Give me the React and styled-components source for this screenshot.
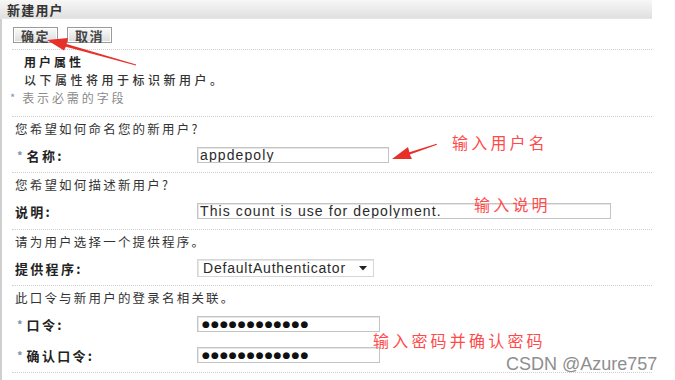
import React from "react";
import styled, { createGlobalStyle } from "styled-components";

const Global = createGlobalStyle`
  html, body { margin: 0; padding: 0; background: #ffffff; }
  body { font-family: "Noto Sans CJK SC", "Liberation Sans", sans-serif; color: #333; }
`;

const Page = styled.div`
  position: relative;
  width: 675px;
  height: 380px;
  overflow: hidden;
  background: #fff;
`;

const Header = styled.div`
  width: 645px;
  height: 18px;
  padding-left: 7px;
  display: flex;
  align-items: center;
  background: linear-gradient(#f7f7f7, #e0e0e0);
  border-bottom: 1px solid #e6e6e6;
  font-size: 13px;
  font-weight: 700;
  letter-spacing: 1.2px;
  color: #333;
`;

const Body = styled.div`
  width: 650px;
  border-left: 2px solid #cfcfcf;
  min-height: 361px;
`;

const Toolbar = styled.div`
  display: flex;
  gap: 9px;
  padding: ${(p) => (p.bottom ? "3px 0 0 13px" : "8px 0 6px 11px")};
`;

const Button = styled.div`
  width: 43px;
  height: 14px;
  border: 1px solid #9a9a9a;
  background: linear-gradient(#fbfbfb, #dcdcdc);
  box-shadow: inset 0 0 0 1px #fff;
  display: flex;
  align-items: center;
  justify-content: center;
  font-size: 13px;
  font-weight: 700;
  letter-spacing: 1.5px;
  color: #444;
`;

const Section = styled.div`
  margin-left: 10px;
  border-top: 1px dotted #cfcfcf;
  padding: 4px 0 ${(p) => p.pb ?? 2}px 3px;
`;

const IntroTitle = styled.div`
  padding-left: 9px;
  line-height: 15px;
  font-size: 12px;
  font-weight: 700;
  letter-spacing: 3px;
  color: #222;
`;

const IntroText = styled.div`
  padding-left: 9px;
  margin-top: 3px;
  line-height: 15px;
  font-size: 12px;
  font-weight: 500;
  letter-spacing: 3.5px;
  color: #333;
`;

const Required = styled.div`
  margin-left: -5px;
  margin-top: 3px;
  line-height: 15px;
  font-size: 12px;
  letter-spacing: 2.9px;
  color: #8a8a8a;
  display: flex;
  gap: 7px;
`;

const Star = styled.span`
  color: #7b93ad;
  font-size: 11px;
  letter-spacing: 0;
`;

const Question = styled.div`
  line-height: 15px;
  font-size: 12.5px;
  letter-spacing: 2.2px;
  color: #333;
`;

const Row = styled.div`
  display: flex;
  align-items: center;
  height: 30px;
  margin-top: ${(p) => (p.first ? 4 : 1)}px;
`;

const Label = styled.div`
  width: 182px;
  flex: none;
  display: flex;
  align-items: center;
  gap: 4px;
  padding-left: ${(p) => (p.required ? 2 : 0)}px;
  box-sizing: border-box;
  font-size: 13px;
  font-weight: 700;
  letter-spacing: 2.3px;
  color: #222;
`;

const Field = styled.div`
  width: ${(p) => p.w}px;
  height: 14px;
  box-sizing: content-box;
  border: 1px solid #c4c4c4;
  box-shadow: inset 1px 1px 0 #e6e6e6;
  background: #fff;
  padding-left: 2px;
  display: flex;
  align-items: center;
  font-family: "Liberation Sans", Arial, sans-serif;
  font-size: 14px;
  letter-spacing: ${(p) => p.ls ?? 1.1}px;
  color: #2a2a2a;
  white-space: nowrap;
  overflow: hidden;
`;

const Select = styled(Field)`
  height: 16px;
  padding-left: 5px;
  justify-content: space-between;
  padding-right: 6px;
  border-color: #d6d6d6;
`;

const Dots = styled.span`
  font-family: "DejaVu Sans", sans-serif;
  font-size: 9px;
  letter-spacing: 1.1px;
  padding-left: 2px;
  color: #111;
`;

const Note = styled.div`
  position: absolute;
  left: ${(p) => p.x}px;
  top: ${(p) => p.y}px;
  font-size: 16px;
  line-height: 16px;
  letter-spacing: 3.2px;
  color: #ff4a4a;
  white-space: nowrap;
`;

const Watermark = styled.div`
  position: absolute;
  left: 506px;
  top: 354px;
  font-family: "Liberation Sans", Arial, sans-serif;
  font-size: 18px;
  color: #8e8e8e;
  white-space: nowrap;
`;

const ArrowLayer = styled.svg`
  position: absolute;
  left: 0;
  top: 0;
  pointer-events: none;
`;

function Req() {
  return <Star>*</Star>;
}

export default function App() {
  return (
    <>
      <Global />
      <Page>
        <Header>新建用户</Header>
        <Body>
          <Toolbar>
            <Button>确定</Button>
            <Button>取消</Button>
          </Toolbar>
          <Section pb={11}>
            <IntroTitle>用户属性</IntroTitle>
            <IntroText>以下属性将用于标识新用户。</IntroText>
            <Required>
              <Star>*</Star>
              <span>表示必需的字段</span>
            </Required>
          </Section>
          <Section>
            <Question>您希望如何命名您的新用户?</Question>
            <Row first>
              <Label required>
                <Req />
                名称:
              </Label>
              <Field w={188}>appdepoly</Field>
            </Row>
          </Section>
          <Section pb={3}>
            <Question>您希望如何描述新用户?</Question>
            <Row first>
              <Label>说明:</Label>
              <Field w={410}>This count is use for depolyment.</Field>
            </Row>
          </Section>
          <Section>
            <Question>请为用户选择一个提供程序。</Question>
            <Row first>
              <Label>提供程序:</Label>
              <Select w={164} ls={0.8}>
                <span>DefaultAuthenticator</span>
                <svg width="8" height="5" viewBox="0 0 8 5">
                  <path d="M0 0 L8 0 L4 4.5 Z" fill="#222" />
                </svg>
              </Select>
            </Row>
          </Section>
          <Section>
            <Question>此口令与新用户的登录名相关联。</Question>
            <Row first>
              <Label required>
                <Req />
                口令:
              </Label>
              <Field w={179}>
                <Dots>●●●●●●●●●●●●</Dots>
              </Field>
            </Row>
            <Row>
              <Label required>
                <Req />
                确认口令:
              </Label>
              <Field w={179}>
                <Dots>●●●●●●●●●●●●</Dots>
              </Field>
            </Row>
          </Section>
          <Section pb={0}>
            <Toolbar bottom>
              <Button />
              <Button />
            </Toolbar>
          </Section>
        </Body>

        <ArrowLayer width="675" height="380" viewBox="0 0 675 380">
          <polygon
            points="47,40 68,38 66.6,43.9 136.1,64.5 135.9,65.5 65.9,46.8 64,50.5"
            fill="#e8302a"
          />
          <polygon
            points="392,159 408,147 409.4,152.3 436.6,143.8 437,144.8 409.8,154.6 412,159"
            fill="#e8302a"
          />
        </ArrowLayer>
        <Note x={452} y={134}>输入用户名</Note>
        <Note x={474} y={196}>输入说明</Note>
        <Note x={373} y={332}>输入密码并确认密码</Note>
        <Watermark>CSDN @Azure757</Watermark>
      </Page>
    </>
  );
}
